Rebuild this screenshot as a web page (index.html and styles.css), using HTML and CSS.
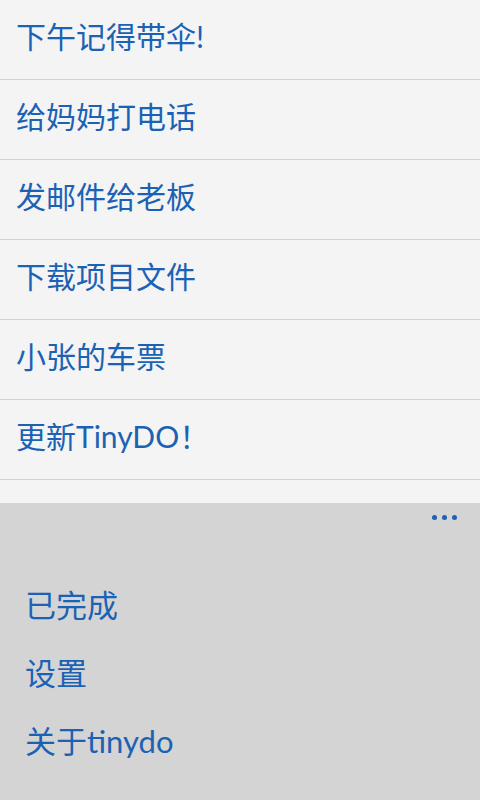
FILE: index.html
```html
<!DOCTYPE html>
<html lang="zh-CN">
<head>
<meta charset="utf-8">
<link rel="stylesheet" href="styles.css">
</head>
<body>
<div class="screen">
  <ul class="tasks">
    <li class="task">下午记得带伞!</li>
    <li class="task">给妈妈打电话</li>
    <li class="task">发邮件给老板</li>
    <li class="task">下载项目文件</li>
    <li class="task">小张的车票</li>
    <li class="task">更新TinyDO！</li>
  </ul>
  <div class="spacer"></div>
  <div class="appbar">
    <div class="dots"><span></span><span></span><span></span></div>
    <ul class="menu">
      <li>已完成</li>
      <li>设置</li>
      <li>关于tinydo</li>
    </ul>
  </div>
</div>
</body>
</html>
```
FILE: styles.css
```css
* { box-sizing: border-box; }
html, body { margin: 0; padding: 0; }
body {
  width: 480px;
  height: 800px;
  overflow: hidden;
  background: #f4f4f4;
  font-family: Lato, "Noto Sans CJK SC", sans-serif;
  font-weight: 400;
  color: #1b62b4;
}
.screen { display: flex; flex-direction: column; height: 800px; }
.tasks { list-style: none; margin: 0; padding: 0; }
.task {
  height: 80px;
  border-bottom: 1px solid #d2d2d2;
  padding-left: 16px;
  font-size: 30px;
  line-height: 72px;
}
.spacer { height: 23px; }
.appbar { flex: 1; background: #d4d4d4; }
.dots { display: flex; justify-content: flex-end; gap: 5px; padding: 12px 23px 0 0; height: 28px; }
.dots span { width: 5px; height: 5px; border-radius: 50%; background: #1b62b4; }
.menu { list-style: none; margin: 0; padding: 40px 0 0 25px; }
.menu li { font-size: 31px; line-height: 68px; height: 68px; }
```
